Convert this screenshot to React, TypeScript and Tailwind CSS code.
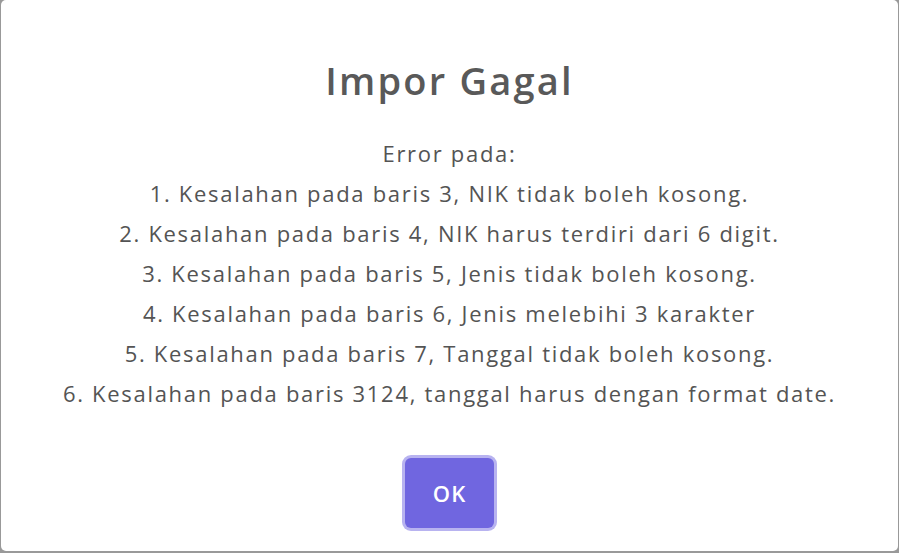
import React from "react";

const errors = [
  "1. Kesalahan pada baris 3, NIK tidak boleh kosong.",
  "2. Kesalahan pada baris 4, NIK harus terdiri dari 6 digit.",
  "3. Kesalahan pada baris 5, Jenis tidak boleh kosong.",
  "4. Kesalahan pada baris 6, Jenis melebihi 3 karakter",
  "5. Kesalahan pada baris 7, Tanggal tidak boleh kosong.",
  "6. Kesalahan pada baris 3124, tanggal harus dengan format date.",
];

const App = () => {
  return (
    <div className="w-[899px] h-[553px] bg-[#999999] overflow-hidden font-['Open_Sans',sans-serif]">
      {/* kotak dialog impor */}
      <div className="ml-[1px] w-[897px] h-[551px] bg-white rounded-[5px] flex flex-col items-center pt-[58px]">
        <h2 className="text-[38px] leading-[44px] font-semibold tracking-[2.2px] text-[#595959]">Impor Gagal</h2>

        <div className="mt-[31px] text-[22px] leading-[40px] tracking-[1.7px] text-[#545454] text-center">
          <div>Error pada:</div>
          {errors.map((e) => (
            <div key={e}>{e}</div>
          ))}
        </div>

        <button className="mt-[45px] w-[89px] h-[70px] rounded-[6px] bg-[#7066e0] text-white text-[22px] tracking-[1px] font-semibold ring-[3px] ring-[#b8b3f0]">
          OK
        </button>
      </div>
    </div>
  );
};

export default App;
